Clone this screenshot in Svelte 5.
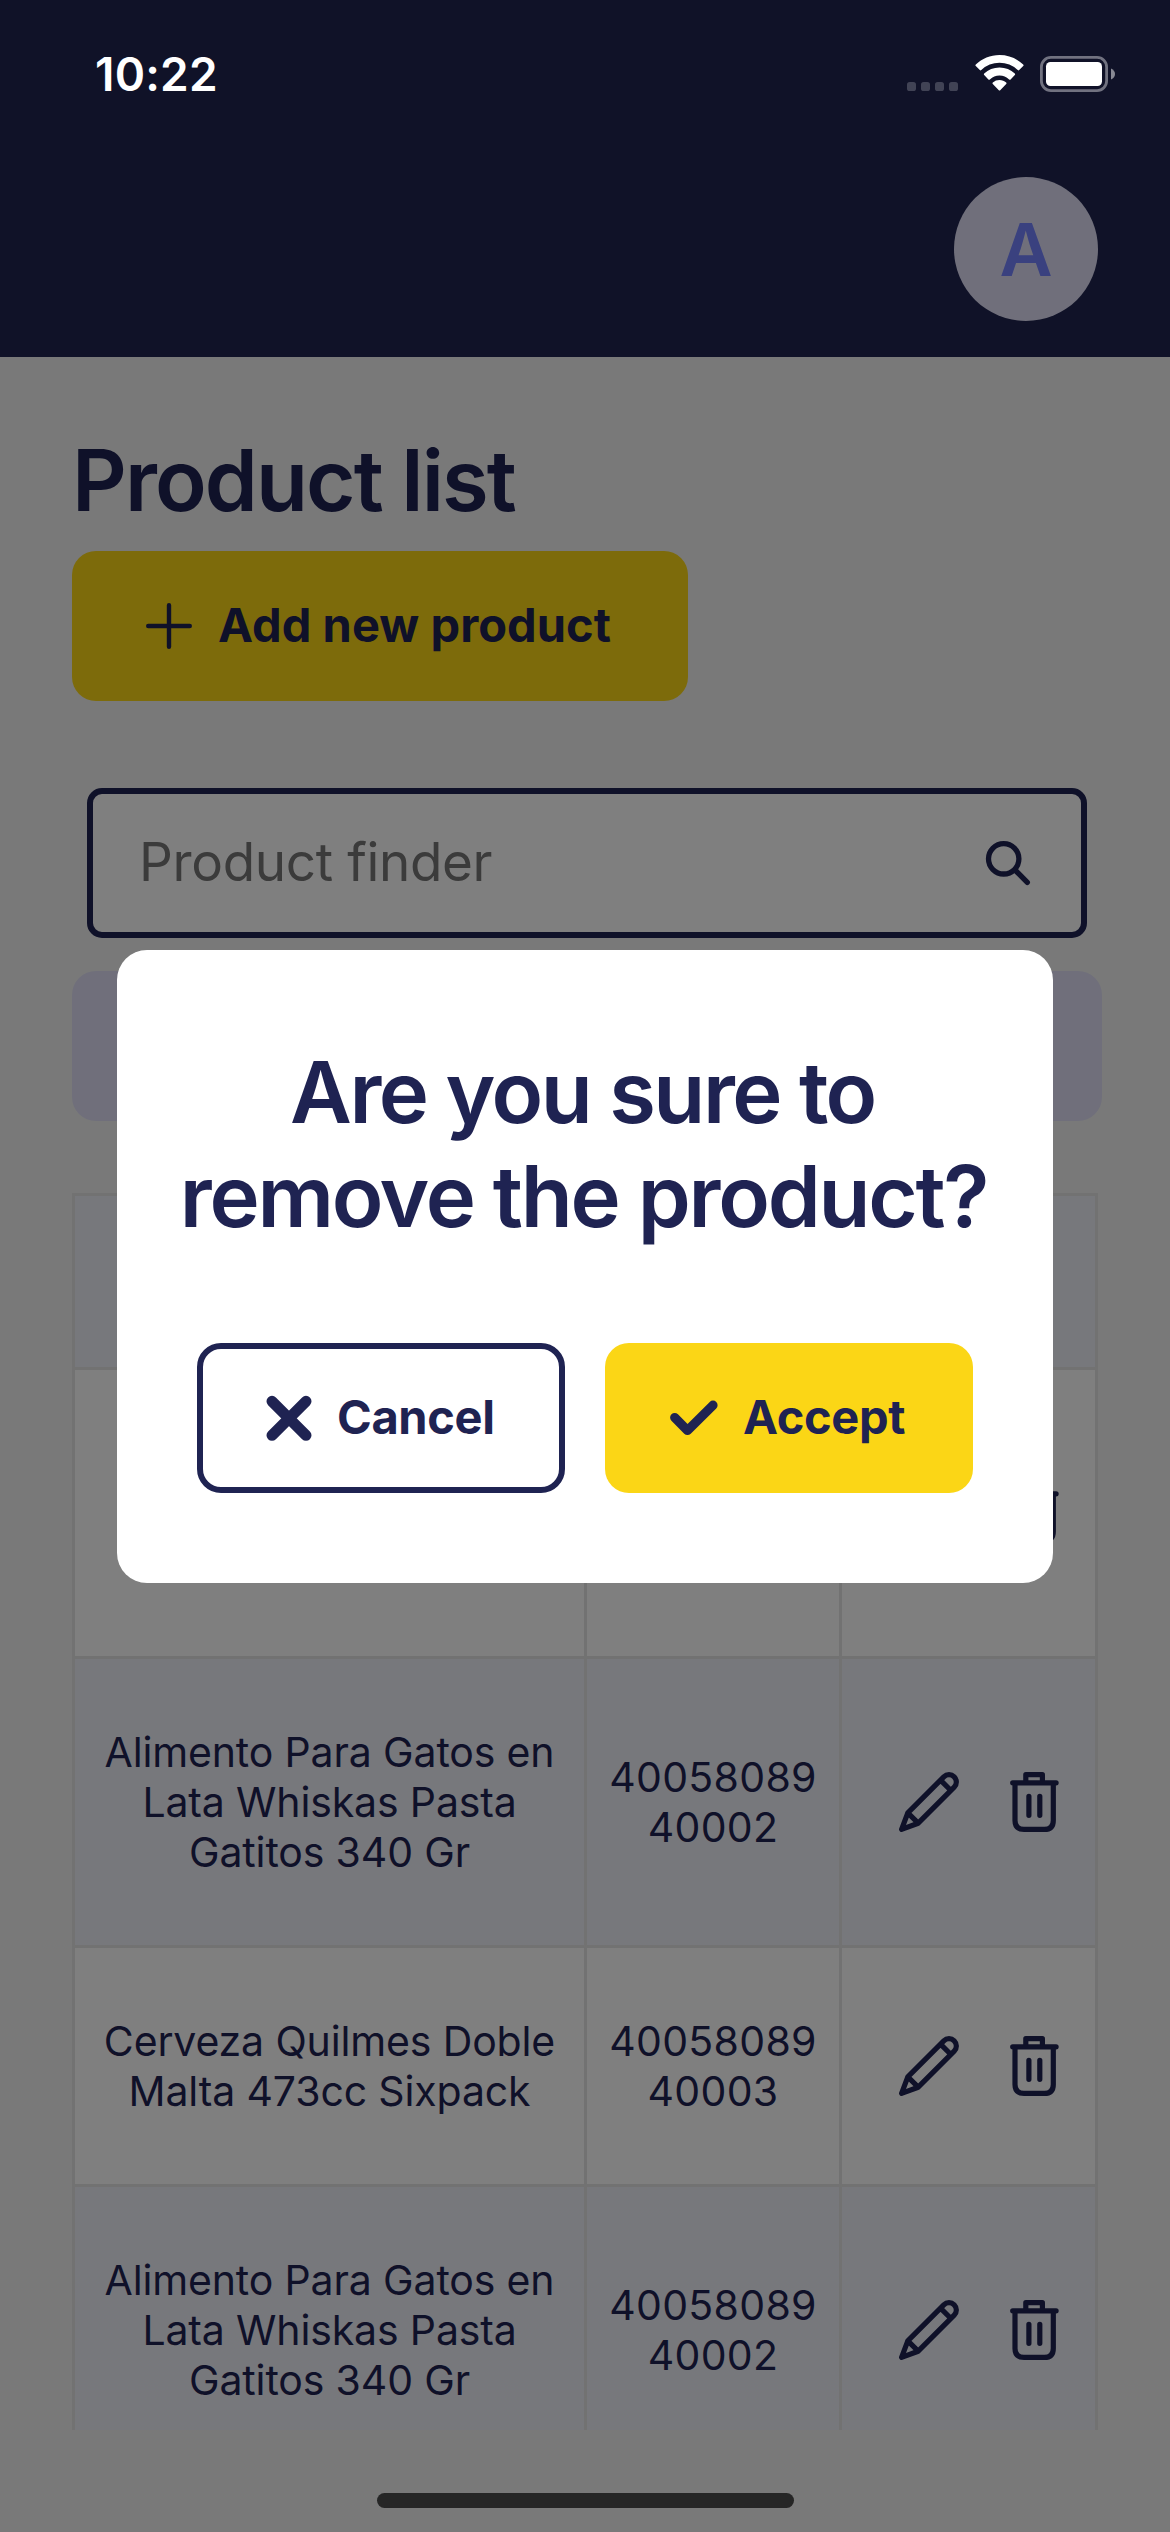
<script>
  const cat = ['Alimento Para Gatos en', 'Lata Whiskas Pasta', 'Gatitos 340 Gr'];
  const rows = [
    { tall: true, name: [], code: [] },
    { tall: true, name: cat, code: ['40058089', '40002'] },
    { tall: false, name: ['Cerveza Quilmes Doble', 'Malta 473cc Sixpack'], code: ['40058089', '40003'] },
    { tall: true, name: cat, code: ['40058089', '40002'] },
  ];
</script>

<div class="screen">
  <header><div class="avatar">A</div></header>

  <main>
    <h1>Product list</h1>
    <button class="add">
      <svg width="46" height="46" viewBox="0 0 46 46"><path d="M23 2.2v41.6M2.2 23h41.6" fill="none" stroke="currentColor" stroke-width="4.4" stroke-linecap="round" /></svg>
      <span>Add new product</span>
    </button>
    <div class="search">
      <span>Product finder</span>
      <svg width="46" height="46" viewBox="0 0 46 46" fill="none" stroke="currentColor"><circle cx="18.7" cy="18.8" r="15.2" stroke-width="5.3" /><path d="m30.5 30.5 11.8 11.8" stroke-width="5.4" stroke-linecap="round" /></svg>
    </div>
    <div class="filter"></div>
    <div class="table">
      <div class="row head"><div></div><div></div><div></div></div>
      {#each rows as row, i}
        <div class="row" class:tall={row.tall} class:alt={i % 2 === 1}>
          <div class="cell">{#each row.name as line}<span class="name">{line}</span>{/each}</div>
          <div class="cell">{#each row.code as line}<span class="code">{line}</span>{/each}</div>
          <div class="actions">
            <svg width="60" height="60" viewBox="0 0 60 60" fill="none" stroke="currentColor" stroke-width="5.2" stroke-linejoin="round" stroke-linecap="round"><path d="M2.600 57.400 8.800 40.800 44.800 4.800a7.350 7.350 0 0 1 10.400 10.400L19.200 51.200ZM41.500 8.100l10.400 10.400M8.800 40.800l10.400 10.400" /></svg>
            <svg width="50" height="60" viewBox="0 0 50 60" fill="none" stroke="currentColor" stroke-width="5.2" stroke-linejoin="round" stroke-linecap="round"><path d="M2.700 10.800h43.400M15.800 10V2.700h16.600V10M5 11v37.400q0 9 9 9h20.300q9 0 9-9V11M18.900 24.300v19M29.800 24.300v19" /></svg>
          </div>
        </div>
      {/each}
    </div>
  </main>

  <div class="overlay">
    <div class="modal">
      <h2><span class="first">Are you sure to</span><span class="second">remove the product?</span></h2>
      <div class="buttons">
        <button class="cancel">
          <svg width="46" height="46" viewBox="0 0 46 46"><path d="M6 6.300l34 34M40 6.300 6 40.300" stroke="currentColor" stroke-width="11" stroke-linecap="round" /></svg>
          <span>Cancel</span>
        </button>
        <button class="accept">
          <svg width="48" height="36" viewBox="0 0 48 36"><path d="M4.700 17.500 17.500 30.500 43 5.200" fill="none" stroke="currentColor" stroke-width="9.200" stroke-linecap="round" stroke-linejoin="round" /></svg>
          <span>Accept</span>
        </button>
      </div>
    </div>
  </div>

  <div class="status">
    <span class="time">10:22</span>
    <div class="signals">
      <svg class="dots" width="52" height="9" viewBox="0 0 52 9" fill="#414355"><rect width="9" height="9" rx="2.6" /><rect x="14" width="9" height="9" rx="2.6" /><rect x="28" width="9" height="9" rx="2.6" /><rect x="42" width="9" height="9" rx="2.6" /></svg>
      <svg class="wifi" width="49" height="36" viewBox="0 0 49 36" fill="#fff"><path d="M24.5 0C33.700 0 42 3.600 48.200 9.500q.8.800 0 1.600l-4 4q-.7.700-1.500 0a26 26 0 0 0-36.400 0q-.8.700-1.500 0l-4-4q-.8-.8 0-1.600C7 3.600 15.300 0 24.500 0Z" /><path d="M24.500 12.500c6 0 11.200 2.200 15.300 6q.8.800 0 1.600l-4.200 4.300q-.7.700-1.500 0a14 14 0 0 0-19.200 0q-.8.700-1.500 0L9.200 20.100q-.8-.8 0-1.600c4.100-3.800 9.300-6 15.300-6Z" /><path d="M24.500 25c2.600 0 4.900.9 6.700 2.400q.8.700 0 1.500l-6 6.300q-.7.600-1.400 0l-6-6.300q-.8-.8 0-1.500A10.500 10.500 0 0 1 24.500 25Z" /></svg>
      <svg width="76" height="36" viewBox="0 0 76 36"><rect x="1.400" y="1.400" width="65.200" height="33.200" rx="9.500" fill="none" stroke="#717280" stroke-width="2.800" /><rect x="6" y="6" width="56" height="24" rx="4.500" fill="#fff" /><path d="M71 12.500q4 2 4 5.500t-4 5.500Z" fill="#888994" /></svg>
    </div>
  </div>
  <div class="home"></div>
</div>

<style>
  :global(body) { margin: 0; }
  .screen { position: relative; width: 1170px; height: 2532px; overflow: hidden; background: #f3f3f3; color: #1f2352; font-family: Inter, "Liberation Sans", sans-serif; }
  header { box-sizing: border-box; height: 357px; padding: 177px 72px 0 0; background: #202450; display: flex; justify-content: flex-end; }
  .avatar { width: 144px; height: 144px; border-radius: 50%; background: #e0dff6; color: #7482fe; display: flex; align-items: center; justify-content: center; font-size: 73px; font-weight: 600; }
  main { box-sizing: border-box; height: 2073px; padding: 72px 68px 0 72px; overflow: hidden; }
  h1, h2 { margin: 0; font-size: 85px; line-height: 104px; font-weight: 600; }
  h1 { letter-spacing: -1.9px; margin-bottom: 18px; white-space: nowrap; }
  button { box-sizing: border-box; height: 150px; border: 0; border-radius: 24px; padding: 0; font: 700 47px/60px Inter, "Liberation Sans", sans-serif; color: #1f2352; display: flex; align-items: center; white-space: nowrap; }
  button span { margin-bottom: 2px; }
  svg { display: block; flex: none; }
  .add { width: 616px; padding-left: 74px; gap: 26px; background: #fbd616; letter-spacing: 0.05px; }
  .search { box-sizing: border-box; width: 1000px; height: 150px; margin: 87px 0 0 15px; padding: 0 50px 0 46px; border: 6px solid #1f2352; border-radius: 15px; background: #fff; display: flex; align-items: center; justify-content: space-between; }
  .search span { font-size: 53px; line-height: 64px; color: #767676; letter-spacing: -0.35px; margin-bottom: 2px; }
  .filter { height: 150px; margin-top: 33px; border-radius: 24px; background: #e0dff6; }
  .table { width: 1026px; margin-top: 72px; padding-top: 3px; background: #e5e5e5; box-sizing: border-box; }
  .row { display: grid; grid-template-columns: 509px 252px 253px; gap: 3px; height: 236px; padding: 0 3px; margin-bottom: 3px; }
  .row > div { background: #fff; }
  .row.head { height: 171px; }
  .row.tall { height: 286px; }
  .row.head > div, .row.alt > div { background: #eff1f8; }
  .cell { display: flex; flex-direction: column; align-items: center; justify-content: center; font-size: 41px; line-height: 50px; white-space: nowrap; }
  .name { letter-spacing: -0.14px; }
  .code { letter-spacing: 0.3px; }
  .actions { display: flex; align-items: center; gap: 51px; padding-left: 57px; box-sizing: border-box; }
  .overlay { position: absolute; inset: 0; background: rgba(0, 0, 0, 0.5); display: flex; align-items: center; justify-content: center; }
  .modal { box-sizing: border-box; width: 936px; height: 633px; padding: 91px 0 0; border-radius: 30px; background: #fff; display: flex; flex-direction: column; align-items: center; }
  h2 span { display: block; text-align: center; white-space: nowrap; }
  .first { letter-spacing: -2.5px; padding-right: 5px; }
  .second { letter-spacing: -2.25px; padding-right: 3px; }
  .buttons { display: flex; gap: 40px; margin-top: 94px; }
  .buttons button { width: 368px; letter-spacing: -0.35px; }
  .cancel { border: 6px solid #1f2352; background: #fff; padding-left: 63px; gap: 25px; }
  .accept { background: #fbd616; padding-left: 65px; gap: 25px; }
  .status { position: absolute; inset: 0 0 auto; height: 148px; padding: 0 54px 0 95px; display: flex; align-items: center; justify-content: space-between; color: #fff; }
  .time { font-size: 46px; font-weight: 600; letter-spacing: 0.2px; }
  .signals { display: flex; align-items: center; }
  .dots { margin: 25px 16px 0 0; }
  .wifi { margin: 0 16px 2px 0; }
  .home { position: absolute; left: 377px; bottom: 24px; width: 417px; height: 15px; border-radius: 8px; background: #262626; }
</style>
